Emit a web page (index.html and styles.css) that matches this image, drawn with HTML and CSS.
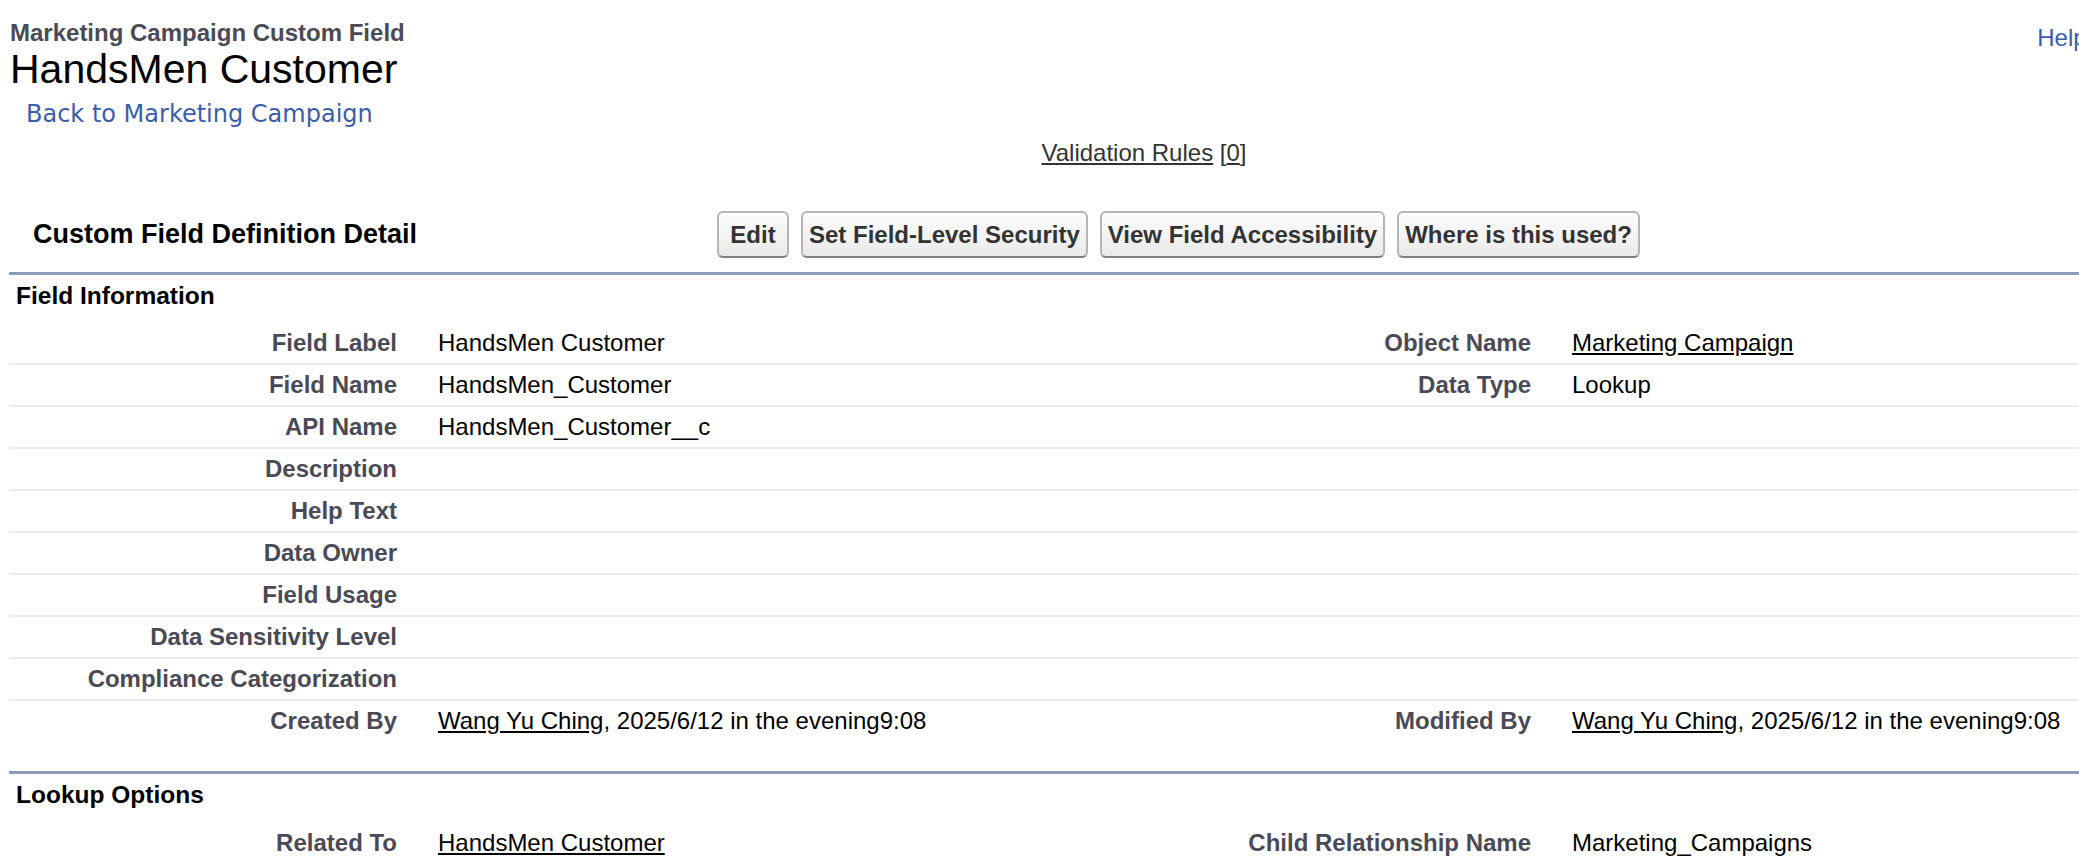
FILE: index.html
```html
<!DOCTYPE html>
<html>
<head>
<meta charset="utf-8">
<title>HandsMen Customer</title>
<link rel="stylesheet" href="styles.css">
</head>
<body>
<div class="page">
  <div class="pt-header">
    <div class="pt-left">
      <h1 class="page-type">Marketing Campaign Custom Field</h1>
      <h2 class="page-description">HandsMen Customer</h2>
      <div class="back-link"><a href="#">Back to Marketing Campaign</a></div>
    </div>
    <div class="help-link">
      <a href="#">Help for this Page</a>
      <svg class="help-icon" width="26" height="26" viewBox="0 0 26 26"><circle cx="13" cy="13" r="12" fill="#1797c0"/><text x="13" y="19" text-anchor="middle" font-family="Liberation Sans, Arial, sans-serif" font-size="17" font-weight="700" fill="#fff">?</text></svg>
    </div>
  </div>

  <div class="rel-links"><a href="#">Validation Rules</a> [<a href="#">0</a>]</div>

  <div class="page-block">
    <div class="pb-header">
      <h2 class="pb-title">Custom Field Definition Detail</h2>
      <div class="pb-buttons">
        <button class="btn btn-edit">Edit</button>
        <button class="btn">Set Field-Level Security</button>
        <button class="btn">View Field Accessibility</button>
        <button class="btn">Where is this used?</button>
      </div>
    </div>

    <div class="pb-subheader"><h3>Field Information</h3></div>
    <div class="detail-list">
      <div class="row"><div class="label-col">Field Label</div><div class="data-col">HandsMen Customer</div><div class="label-col">Object Name</div><div class="data-col"><a href="#">Marketing Campaign</a></div></div>
      <div class="row"><div class="label-col">Field Name</div><div class="data-col">HandsMen_Customer</div><div class="label-col">Data Type</div><div class="data-col">Lookup</div></div>
      <div class="row"><div class="label-col">API Name</div><div class="data-col">HandsMen_Customer__c</div><div class="label-col"></div><div class="data-col"></div></div>
      <div class="row"><div class="label-col">Description</div><div class="data-col"></div><div class="label-col"></div><div class="data-col"></div></div>
      <div class="row"><div class="label-col">Help Text</div><div class="data-col"></div><div class="label-col"></div><div class="data-col"></div></div>
      <div class="row"><div class="label-col">Data Owner</div><div class="data-col"></div><div class="label-col"></div><div class="data-col"></div></div>
      <div class="row"><div class="label-col">Field Usage</div><div class="data-col"></div><div class="label-col"></div><div class="data-col"></div></div>
      <div class="row"><div class="label-col">Data Sensitivity Level</div><div class="data-col"></div><div class="label-col"></div><div class="data-col"></div></div>
      <div class="row"><div class="label-col">Compliance Categorization</div><div class="data-col"></div><div class="label-col"></div><div class="data-col"></div></div>
      <div class="row last"><div class="label-col">Created By</div><div class="data-col"><a href="#">Wang Yu Ching</a>, 2025/6/12 in the evening9:08</div><div class="label-col">Modified By</div><div class="data-col"><a href="#">Wang Yu Ching</a>, 2025/6/12 in the evening9:08</div></div>
    </div>

    <div class="pb-subheader section-gap"><h3>Lookup Options</h3></div>
    <div class="detail-list">
      <div class="row last lookup-row"><div class="label-col">Related To</div><div class="data-col"><a href="#">HandsMen Customer</a></div><div class="label-col">Child Relationship Name</div><div class="data-col">Marketing_Campaigns</div></div>
    </div>
  </div>
</div>
</body>
</html>
```

FILE: styles.css
```css
html {
  overflow: hidden;
  background: #fff;
}

body {
  margin: 0;
  font-family: "Liberation Sans", Arial, sans-serif;
  font-size: 24px;
  color: #000;
}

.page {
  width: 2288px;
}

a {
  color: #000;
}

.pt-header {
  display: flex;
  justify-content: space-between;
  align-items: flex-start;
  padding: 19px 0 0 10px;
}

.page-type {
  margin: 0;
  font-size: 24px;
  line-height: 28px;
  font-weight: 700;
  color: #4a4a56;
}

.page-description {
  margin: 0;
  font-size: 41px;
  line-height: 45px;
  font-weight: 400;
  color: #000;
}

.back-link {
  margin: 8px 0 0 16px;
  font-family: "DejaVu Sans", Verdana, sans-serif;
  font-size: 24px;
  line-height: 28px;
}

.back-link a {
  color: #3a5ea8;
  text-decoration: none;
}

.help-link {
  display: flex;
  align-items: center;
  gap: 8px;
  padding: 5px 26px 0 0;
  line-height: 28px;
}

.help-link a {
  color: #3a5ea8;
  text-decoration: none;
}

.rel-links {
  margin-top: 11px;
  text-align: center;
  line-height: 28px;
  color: #333;
}

.rel-links a {
  color: #333;
}

.page-block {
  padding-left: 9px;
}

.pb-header {
  display: flex;
  align-items: center;
  margin-top: 44px;
  height: 47px;
}

.pb-title {
  width: 684px;
  margin: 0;
  padding: 0 0 2px 24px;
  font-size: 27px;
  line-height: 32px;
  font-weight: 700;
  color: #000;
}

.pb-buttons {
  display: flex;
  gap: 12px;
}

.btn {
  height: 47px;
  padding: 0 6px;
  border: 2px solid #b5b5b5;
  border-bottom-color: #7f7f7f;
  border-radius: 6px;
  background: linear-gradient(#fdfdfd, #e9e9e9);
  font-family: "Liberation Sans", Arial, sans-serif;
  font-size: 24px;
  font-weight: 700;
  color: #333;
}

.btn-edit {
  min-width: 72px;
}

.pb-subheader {
  margin-top: 14px;
  border-top: 3px solid #8e9dbe;
}

.pb-subheader h3 {
  margin: 0;
  padding: 7px 0 13px 7px;
  font-size: 24.5px;
  line-height: 28px;
  font-weight: 700;
  color: #000;
}

.section-gap {
  margin-top: 30px;
}

.row {
  display: grid;
  grid-template-columns: 408px 726px 408px 726px;
  border-bottom: 2px solid #ececec;
}

.row.last {
  border-bottom: none;
}

.lookup-row {
  padding-top: 1px;
}

.label-col {
  padding: 6px 20px 6px 0;
  text-align: right;
  font-weight: 700;
  color: #4a4a56;
  line-height: 28px;
  min-height: 28px;
}

.data-col {
  padding: 6px 0 6px 21px;
  line-height: 28px;
  color: #000;
}
```
